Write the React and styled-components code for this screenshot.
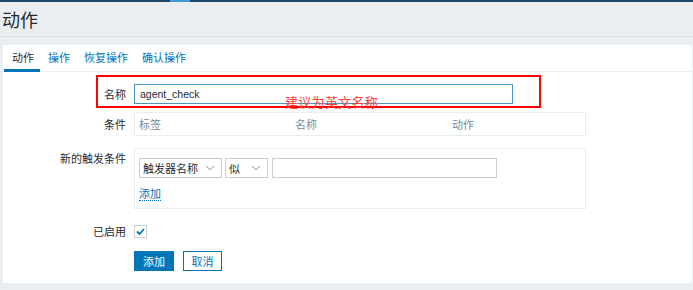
import React, { useState } from "react";
import styled, { createGlobalStyle } from "styled-components";

const GlobalStyle = createGlobalStyle`
  html, body {
    margin: 0;
    padding: 0;
    background: #ebeef1;
    font-family: "Liberation Sans", "Noto Sans CJK SC", Arial, sans-serif;
    font-size: 11px;
    color: #1f2c33;
  }
`;

const tabs = ["动作", "操作", "恢复操作", "确认操作"];

export default function App() {
  const [active, setActive] = useState(0);
  const [enabled, setEnabled] = useState(true);

  return (
    <Page>
      <GlobalStyle />
      <TopBar>
        <TopGap />
        <TopMark />
      </TopBar>
      <Header>
        <Title>动作</Title>
      </Header>
      <Panel>
        <TabList>
          {tabs.map((t, i) => (
            <Tab key={t} $active={i === active} onClick={() => setActive(i)}>
              {t}
            </Tab>
          ))}
        </TabList>
        <Form>
          <Row $mt={12}>
            <Label>名称</Label>
            <TextInput $focused defaultValue="agent_check" $w={379} />
            <RedBox />
            <RedNote>建议为英文名称</RedNote>
          </Row>
          <Row $mt={8}>
            <Label $lh={24}>条件</Label>
            <CondTable>
              <span>标签</span>
              <span>名称</span>
              <span>动作</span>
            </CondTable>
          </Row>
          <Row $mt={12}>
            <Label>新的触发条件</Label>
            <TriggerBox>
              <Controls>
                <Select $w={83}>
                  <span>触发器名称</span>
                  <Chevron />
                </Select>
                <Select $w={43}>
                  <span>似</span>
                  <Chevron />
                </Select>
                <TextInput $w={225} $ml={1} />
              </Controls>
              <LinkRow>
                <DottedLink>添加</DottedLink>
              </LinkRow>
            </TriggerBox>
          </Row>
          <Row $mt={16} $center>
            <Label $lh={13}>已启用</Label>
            <Checkbox onClick={() => setEnabled(!enabled)}>
              {enabled && (
                <svg width="11" height="11" viewBox="0 0 11 11">
                  <path
                    d="M2 5.5 L4.5 8 L9 3"
                    fill="none"
                    stroke="#0275b8"
                    strokeWidth="1.8"
                  />
                </svg>
              )}
            </Checkbox>
          </Row>
          <Row $mt={13}>
            <span />
            <Buttons>
              <Button $primary>添加</Button>
              <Button>取消</Button>
            </Buttons>
          </Row>
        </Form>
      </Panel>
    </Page>
  );
}

function Chevron() {
  return (
    <svg width="10" height="6" viewBox="0 0 10 6">
      <path d="M1 0.8 L5 4.8 L9 0.8" fill="none" stroke="#7f8f99" strokeWidth="1" />
    </svg>
  );
}

const Page = styled.div`
  width: 693px;
  min-height: 290px;
  padding-bottom: 7px;
  box-sizing: border-box;
`;

const TopBar = styled.div`
  display: flex;
  height: 2px;
  background: #1b4567;
`;

const TopGap = styled.div`
  width: 170px;
`;

const TopMark = styled.div`
  width: 20px;
  background: #3f9bd6;
`;

const Header = styled.div`
  height: 34px;
  display: flex;
  align-items: center;
  padding-left: 2px;
  border-bottom: 1px solid #dde2e6;
`;

const Title = styled.h1`
  margin: 0;
  font-family: "Noto Sans CJK SC", sans-serif;
  font-size: 18px;
  font-weight: 400;
  color: #1f2c33;
`;

const Panel = styled.div`
  margin: 8px 1px 0 3px;
  background: #ffffff;
`;

const TabList = styled.div`
  display: flex;
  height: 26px;
  padding-left: 1px;
  border-bottom: 1px solid #ebeef1;
`;

const Tab = styled.div`
  display: flex;
  align-items: center;
  padding: 0 6px 0 8px;
  font-family: "Noto Sans CJK SC", sans-serif;
  font-size: 11px;
  color: ${(p) => (p.$active ? "#1f2c33" : "#0275b8")};
  border-bottom: 3px solid ${(p) => (p.$active ? "#0275b8" : "transparent")};
  margin-bottom: -1px;
  box-sizing: border-box;
  cursor: pointer;
`;

const Form = styled.div`
  padding-bottom: 12px;
`;

const Row = styled.div`
  position: relative;
  display: grid;
  grid-template-columns: 123px 1fr;
  column-gap: 8px;
  align-items: ${(p) => (p.$center ? "center" : "start")};
  margin-top: ${(p) => p.$mt || 0}px;
`;

const Label = styled.div`
  text-align: right;
  font-family: "Noto Sans CJK SC", sans-serif;
  font-size: 11px;
  line-height: ${(p) => p.$lh || 20}px;
  color: #1f2c33;
`;

const TextInput = styled.input`
  width: ${(p) => p.$w}px;
  height: 20px;
  margin-left: ${(p) => p.$ml || 0}px;
  box-sizing: border-box;
  border: 1px solid ${(p) => (p.$focused ? "#4796c4" : "#c5ced4")};
  padding: 0 5px;
  font-family: "Liberation Sans", Arial, sans-serif;
  font-size: 10.5px;
  color: #1f2c33;
  outline: none;
  background: #fff;
`;

const RedBox = styled.div`
  position: absolute;
  left: 93px;
  top: -9px;
  width: 445px;
  height: 33px;
  border: 2px solid #ff0000;
  box-sizing: border-box;
  pointer-events: none;
`;

const RedNote = styled.div`
  position: absolute;
  left: 282px;
  top: 11px;
  font-family: "Noto Sans CJK SC", serif;
  font-size: 13px;
  line-height: 13px;
  color: #ff3b3b;
  letter-spacing: 0.3px;
  pointer-events: none;
`;

const CondTable = styled.div`
  width: 452px;
  height: 24px;
  box-sizing: border-box;
  border: 1px solid #ebeef1;
  display: grid;
  grid-template-columns: 156px 157px 1fr;
  align-items: center;
  padding: 0 4px;
  font-family: "Noto Sans CJK SC", sans-serif;
  font-size: 11px;
  color: #768d99;
`;

const TriggerBox = styled.div`
  width: 452px;
  box-sizing: border-box;
  border: 1px solid #ebeef1;
  padding: 9px 4px 7px;
`;

const Controls = styled.div`
  display: flex;
  gap: 3px;
`;

const Select = styled.div`
  width: ${(p) => p.$w}px;
  height: 20px;
  box-sizing: border-box;
  border: 1px solid #c5ced4;
  display: flex;
  align-items: center;
  justify-content: space-between;
  padding: 0 6px 0 3px;
  font-family: "Noto Sans CJK SC", sans-serif;
  font-size: 11px;
  color: #1f2c33;
`;

const LinkRow = styled.div`
  margin-top: 7px;
  height: 16px;
  display: flex;
  align-items: flex-end;
`;

const DottedLink = styled.span`
  font-family: "Noto Sans CJK SC", sans-serif;
  font-size: 11px;
  line-height: 14px;
  color: #0275b8;
  border-bottom: 1px dotted #0275b8;
  cursor: pointer;
`;

const Checkbox = styled.div`
  width: 13px;
  height: 13px;
  box-sizing: border-box;
  border: 1px solid #c5ced4;
  display: flex;
  align-items: center;
  justify-content: center;
  cursor: pointer;
`;

const Buttons = styled.div`
  display: flex;
  gap: 9px;
`;

const Button = styled.button`
  height: 20px;
  width: ${(p) => (p.$primary ? 40 : 39)}px;
  padding: 0;
  box-sizing: border-box;
  border: 1px solid #0275b8;
  background: ${(p) => (p.$primary ? "#0275b8" : "#ffffff")};
  color: ${(p) => (p.$primary ? "#ffffff" : "#0275b8")};
  font-family: "Noto Sans CJK SC", sans-serif;
  font-size: 11px;
  cursor: pointer;
`;
